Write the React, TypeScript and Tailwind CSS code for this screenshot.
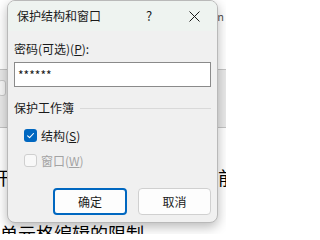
const font = "font-['Noto_Sans_CJK_SC','Noto_Sans',sans-serif]";

export default function App() {
  return (
    <div className={`relative w-[226px] h-[234px] overflow-hidden bg-white ${font}`}>
      {/* document behind the dialog */}
      <div className="flex flex-col">
        <div className="h-[69px] flex justify-end pr-[2px] pt-[10px]">
          <span className="text-[11px] leading-[12px] text-[#555]">n</span>
        </div>
        <div className="h-[59px] bg-[#e9e9e9] border-y border-[#c4c4c4] flex items-start pt-[10px]">
          <div className="w-[8px] h-[16px] ml-[-2px] rounded-[3px] border border-[#c9c9c9] bg-[#f7f7f7]" />
        </div>
        <div className="flex justify-between mt-[37px] text-[18px] leading-[24px] text-black">
          <span className="ml-[-9px]">开</span>
          <span className="mr-[-10px]">前</span>
        </div>
        <div className="mt-[32px] text-[18px] leading-[24px] text-black whitespace-nowrap">单元格编辑的限制</div>
      </div>

      {/* dialog */}
      <div className="absolute left-[7px] top-0 w-[211px] h-[223px] rounded-[8px] border border-[#b9b9b9] bg-[#f0f0f0] shadow-[0_4px_12px_rgba(0,0,0,0.28)] overflow-hidden flex flex-col text-[12px] leading-[16px] text-[#1a1a1a]">
        <div className="h-[30px] shrink-0 bg-[#eef3f0] flex items-center">
          <span className="flex-1 pl-[9px]">保护结构和窗口</span>
          <span className="w-[44px] text-center text-[13px]">?</span>
          <span className="w-[46px] flex justify-center">
            <svg width="11" height="11" viewBox="0 0 11 11" fill="none">
              <path d="M0.5 0.5 L10.5 10.5 M10.5 0.5 L0.5 10.5" stroke="#1a1a1a" strokeWidth="1" />
            </svg>
          </span>
        </div>

        <div className="flex flex-col px-[6px]">
          <div className="mt-[10px]">
            密码(可选)(<span className="underline">P</span>):
          </div>
          <div className="mt-[5px] h-[25px] border border-[#8a8a8a] bg-white flex items-center pl-[3px] text-[12px]">
            ******
          </div>

          <div className="mt-[13px] flex items-center gap-[6px]">
            <span>保护工作簿</span>
            <div className="flex-1 h-px bg-[#d9d9d9]" />
          </div>

          <div className="mt-[11px] h-[17px] flex items-center gap-[4px] pl-[10px]">
            <span className="w-[13px] h-[13px] rounded-[3px] bg-[#0067c0] flex items-center justify-center">
              <svg width="13" height="13" viewBox="0 0 13 13" fill="none">
                <path d="M3.6 6.8 L5.6 8.7 L9.5 4.5" stroke="white" strokeWidth="1.1" strokeLinecap="round" strokeLinejoin="round" />
              </svg>
            </span>
            <span>
              结构(<span className="underline">S</span>)
            </span>
          </div>

          <div className="mt-[8px] h-[17px] flex items-center gap-[4px] pl-[10px] text-[#a3a3a3]">
            <span className="w-[13px] h-[13px] rounded-[3px] border border-[#cfcfcf] bg-[#f8f8f8]" />
            <span>
              窗口(<span className="underline">W</span>)
            </span>
          </div>

          <div className="mt-[19px] flex justify-end gap-[11px]">
            <button className="w-[74px] h-[27px] rounded-[4px] border-2 border-[#0067c0] bg-[#fdfdfd] text-[12px] text-[#1a1a1a]">
              确定
            </button>
            <button className="w-[73px] h-[27px] rounded-[4px] border border-[#d0d0d0] bg-[#fdfdfd] text-[12px] text-[#1a1a1a]">
              取消
            </button>
          </div>
        </div>
      </div>
    </div>
  );
}
